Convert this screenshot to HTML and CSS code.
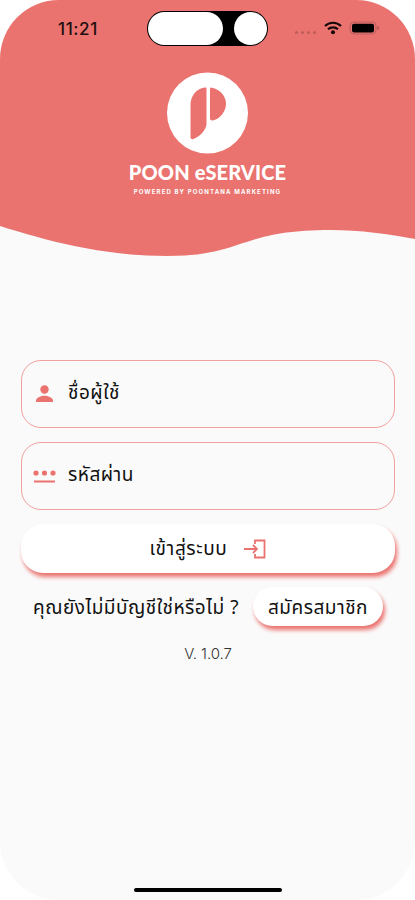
FILE: index.html
```html
<!DOCTYPE html>
<html lang="th">
<head>
    <meta charset="UTF-8">
    <meta name="viewport" content="width=device-width, initial-scale=1.0">
    <title>POON eSERVICE</title>
    <link rel="stylesheet" href="styles.css">
</head>
<body>

    <div class="screen">
        <header class="header">
            <div class="status-bar">
                <span class="time">11:21</span>
                <div class="island">
                    <span class="pill"></span>
                    <span class="camera"></span>
                </div>
                <div class="status-icons">
                    <div class="signal"><i></i><i></i><i></i><i></i></div>
                    <svg class="wifi" width="18" height="14" viewBox="0 0 18 14">
                        <path d="M1 5a11.5 11.5 0 0 1 16 0M4 8.3a7.2 7.2 0 0 1 10 0" fill="none" stroke="#140809" stroke-width="2.2"/>
                        <circle cx="9" cy="11.2" r="2" fill="#140809"/>
                    </svg>
                    <svg class="battery" width="31" height="14" viewBox="0 0 31 14">
                        <rect x="1" y="1" width="26" height="12" rx="4" fill="none" stroke="#b9605e"/>
                        <rect x="3" y="2.8" width="22" height="8.6" rx="2" fill="#000"/>
                        <path d="M28.4 5v4q1.6-.6 1.6-2t-1.6-2z" fill="#a94f4e"/>
                    </svg>
                </div>
            </div>

            <div class="brand">
                <svg class="logo" width="82" height="82" viewBox="0 0 82 82">
                    <circle cx="40.5" cy="41" r="40.5" fill="#fff"/>
                    <path d="M39.5 16v36c0 5-6 12.5-13 15-2 .7-3-.3-3-2V33c0-9 6-16.5 14-17.5q2-.3 2 .5z" fill="#ea736f"/>
                    <path d="M43 17q0-1.7 2-1.3C52.5 17 59 23.5 59 31.5s-5.5 15-13 17q-3 .4-3-2z" fill="#ea736f"/>
                </svg>
                <h1>POON eSERVICE</h1>
                <p>POWERED BY POONTANA MARKETING</p>
            </div>
        </header>
        <svg class="wave" width="415" height="32" viewBox="0 0 415 32">
            <path d="M0 0v1c45 14 101 30 167 30 78 0 71-26 164-26 29 0 58 4 84 9V0z" fill="#ea736f"/>
        </svg>

        <main class="login">
            <label class="field">
                <svg width="24" height="24" viewBox="0 0 24 24" fill="#ea736f">
                    <circle cx="12.5" cy="7.5" r="4.2"/>
                    <path d="M4 20v-1.500c0-3 5.500-4.800 8.500-4.800s8.500 1.800 8.500 4.800V20z"/>
                </svg>
                <span>ชื่อผู้ใช้</span>
            </label>
            <label class="field">
                <svg width="24" height="24" viewBox="0 0 24 24" fill="#ea736f">
                    <circle cx="4" cy="9" r="2.6"/>
                    <circle cx="12.5" cy="9" r="2.6"/>
                    <circle cx="21" cy="9" r="2.6"/>
                    <path d="M2 16.5h21v2H2z"/>
                </svg>
                <span>รหัสผ่าน</span>
            </label>

            <button class="login-button">
                <span>เข้าสู่ระบบ</span>
                <svg width="22" height="20" viewBox="0 0 22 20" fill="none" stroke="#ea736f" stroke-width="1.8">
                    <path d="M11 5V1.500h9.500v17H11V15M0 10h13M9 6l4 4-4 4"/>
                </svg>
            </button>

            <div class="signup">
                <span class="question">คุณยังไม่มีบัญชีใช่หรือไม่ ?</span>
                <button class="signup-button">สมัครสมาชิก</button>
            </div>

            <p class="version">V. 1.0.7</p>
        </main>

        <div class="home-bar"></div>
    </div>

</body>
</html>
```
FILE: styles.css
```css
* {
    margin: 0;
    padding: 0;
    box-sizing: border-box;
}

body {
    background: #fff;
    font-family: 'Noto Sans Thai', 'Noto Sans', sans-serif;
    color: #111;
}

svg {
    display: block;
    flex-shrink: 0;
}

.screen {
    display: flex;
    flex-direction: column;
    width: 415px;
    height: 900px;
    background: #fafafa;
    border-radius: 59px;
    overflow: hidden;
}

.header {
    height: 225px;
    background: #ea736f;
}

.wave {
    flex-shrink: 0;
}

.status-bar {
    display: grid;
    grid-template-columns: 147px 121px 1fr;
    height: 72px;
    padding-top: 11px;
}

.time {
    padding: 8px 0 0 58px;
    font: 500 17px/20px Inter, sans-serif;
    letter-spacing: 0.6px;
    color: #210f10;
}

.island {
    display: flex;
    justify-content: space-between;
    height: 35px;
    padding: 1px;
    background: #000;
    border-radius: 18px;
}

.pill {
    width: 75px;
    background: #fff;
    border-radius: 17px;
}

.camera {
    width: 33px;
    background: #fff;
    border-radius: 50%;
}

.status-icons {
    display: flex;
    align-items: flex-start;
    padding: 10px 0 0 27px;
}

.signal {
    display: flex;
    gap: 3px;
    width: 29px;
    padding-top: 10px;
}

.signal i {
    width: 3px;
    height: 3px;
    background: #bd5c59;
    border-radius: 50%;
}

.battery {
    margin-left: 7px;
}

.brand {
    display: flex;
    flex-direction: column;
    align-items: center;
    color: #fff;
    white-space: nowrap;
}

.brand h1 {
    margin-top: 6px;
    font: 900 20px/24px Lato, sans-serif;
    letter-spacing: 0.15px;
}

.brand p {
    margin-top: 4px;
    font: 700 6px/7px Inter, sans-serif;
    letter-spacing: 1.15px;
}

.login {
    display: flex;
    flex-direction: column;
    padding: 103px 20px 0 21px;
}

.field {
    display: flex;
    align-items: center;
    gap: 12px;
    height: 68px;
    margin-bottom: 14px;
    padding-left: 10px;
    border: 1px solid #efa09f;
    border-radius: 20px;
    font-size: 19px;
    letter-spacing: 0.5px;
}

.field span {
    padding-bottom: 1px;
}

button {
    border: none;
    background: #fff;
    font-family: inherit;
    font-size: 19px;
    letter-spacing: 0.5px;
    color: #111;
    box-shadow: 2px 4px 4px #ea736f;
}

.login-button {
    display: flex;
    justify-content: center;
    align-items: center;
    gap: 17px;
    height: 49px;
    border-radius: 22px;
}

.login-button span {
    padding-top: 2px;
    letter-spacing: 0.6px;
}

.signup {
    display: flex;
    align-items: center;
    justify-content: space-between;
    height: 39px;
    margin-top: 14px;
    padding: 0 12px;
    white-space: nowrap;
}

.question {
    padding-top: 3px;
    font-size: 19px;
    letter-spacing: 0.5px;
}

.signup-button {
    width: 130px;
    height: 39px;
    padding-top: 3px;
    border-radius: 20px;
}

.version {
    margin-top: 18px;
    font: 300 15px/20px Inter, sans-serif;
    letter-spacing: -0.1px;
    text-align: center;
    color: #333;
}

.home-bar {
    width: 148px;
    height: 4px;
    margin: auto auto 8px 134px;
    background: #000;
    border-radius: 2px;
}
```
